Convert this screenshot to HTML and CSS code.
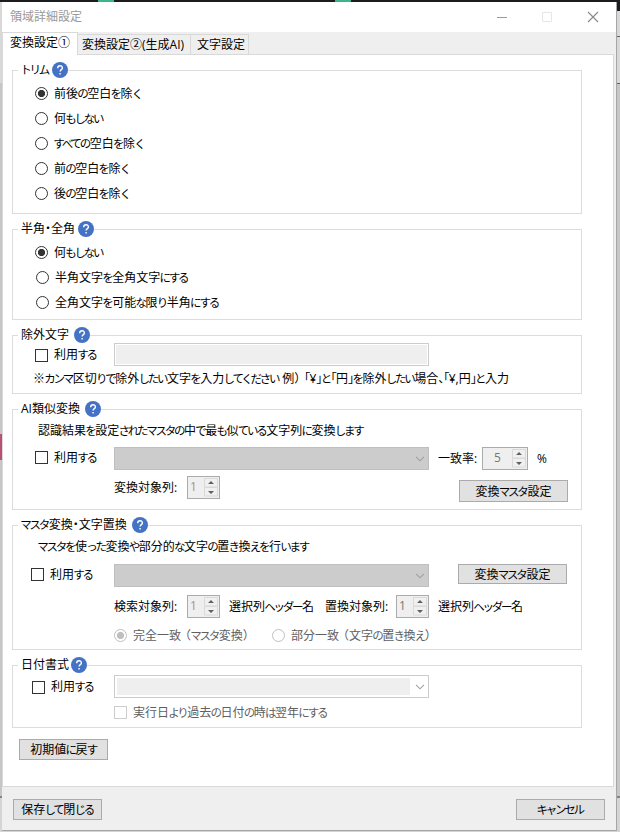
FILE: index.html
```html
<!DOCTYPE html>
<html lang="ja">
<head>
<meta charset="utf-8">
<title>領域詳細設定</title>
<link rel="stylesheet" href="styles.css">
</head>
<body>
<svg class="defs" aria-hidden="true">
  <symbol id="help" viewBox="0 0 16 16"><circle cx="8" cy="8" r="8" fill="#4472c4"/><path d="M5.7 6.2C5.7 3 10.4 3 10.4 5.9C10.4 7.6 8.1 7.7 8.1 9.6M8.1 11v1.6" fill="none" stroke="#fff" stroke-width="1.4"/></symbol>
  <symbol id="chev" viewBox="0 0 10 6"><path d="M1 .8L5 4.8L9 .8" fill="none" stroke="#a0a0a0" stroke-width="1.1"/></symbol>
  <symbol id="spin" viewBox="0 0 14 19"><path d="M.5 .5h13v8.500h-13zM.5 9.500h13v8.500h-13z" fill="#f0f0f0" stroke="#d9d9d9"/><path d="M4 6L7 3L10 6zM4 13L7 16L10 13z" fill="#606060"/></symbol>
</svg>
<div class="window">
  <header class="titlebar">
    <span class="title">領域詳細設定</span>
    <svg class="controls" width="104" height="12" viewBox="0 0 104 12"><path d="M0 6.500h10" stroke="#999"/><path d="M45.500 1.500h9v9h-9z" fill="none" stroke="#e6e6e6"/><path d="M91 1l10 10M101 1l-10 10" stroke="#888" stroke-width="1.1"/></svg>
  </header>
  <nav class="tabs">
    <span class="tab active">変換設定①</span><span class="tab">変換設定②(生成AI)</span><span class="tab last">文字設定</span>
  </nav>
  <main class="panel">
    <section class="group trim">
      <h2><i>トリム</i><svg><use href="#help"/></svg></h2>
      <label class="opt"><b class="radio on"></b>前後<i>の</i>空白<i>を</i>除<i>く</i></label>
      <label class="opt"><b class="radio"></b>何<i>もしない</i></label>
      <label class="opt"><b class="radio"></b><i>すべての</i>空白<i>を</i>除<i>く</i></label>
      <label class="opt"><b class="radio"></b>前<i>の</i>空白<i>を</i>除<i>く</i></label>
      <label class="opt"><b class="radio"></b>後<i>の</i>空白<i>を</i>除<i>く</i></label>
    </section>
    <section class="group width">
      <h2>半角<em>・</em>全角<svg><use href="#help"/></svg></h2>
      <label class="opt"><b class="radio on"></b>何<i>もしない</i></label>
      <label class="opt shift"><b class="radio"></b>半角文字<i>を</i>全角文字<i>にする</i></label>
      <label class="opt shift"><b class="radio"></b>全角文字<i>を</i>可能<i>な</i>限<i>り</i>半角<i>にする</i></label>
    </section>
    <section class="group exclude">
      <h2>除外文字<svg class="far"><use href="#help"/></svg></h2>
      <div class="row">
        <label class="use"><b class="check"></b>利用<i>する</i></label>
        <span class="input"></span>
      </div>
      <p class="note">※<i>カンマ</i>区切<i>りで</i>除外<i>したい</i>文字<i>を</i>入力<i>してください</i> 例<em class="example">）</em><em>「</em>¥<em>」</em><i>と</i><em>「</em>円<em>」</em><i>を</i>除外<i>したい</i>場合<em>、「</em>¥,円<em>」</em><i>と</i>入力</p>
    </section>
    <section class="group similar">
      <h2>AI類似変換<svg class="far"><use href="#help"/></svg></h2>
      <p class="desc">認識結果<i>を</i>設定<i>されたマスタの</i>中<i>で</i>最<i>も</i>似<i>ている</i>文字列<i>に</i>変換<i>します</i></p>
      <div class="row select-row">
        <label class="use"><b class="check"></b>利用<i>する</i></label>
        <span class="select"><svg><use href="#chev"/></svg></span>
        <span class="rate">一致率:</span>
        <span class="spinner wide"><span>5</span><svg><use href="#spin"/></svg></span>
        <span class="percent">%</span>
      </div>
      <div class="row column-row">
        <span class="collabel">変換対象列:</span>
        <span class="spinner warm"><span>1</span><svg><use href="#spin"/></svg></span>
        <button class="master">変換<i>マスタ</i>設定</button>
      </div>
    </section>
    <section class="group replace">
      <h2><i>マスタ</i>変換<em>・</em>文字置換<svg class="far"><use href="#help"/></svg></h2>
      <p class="desc"><i>マスタを</i>使<i>った</i>変換<i>や</i>部分的<i>な</i>文字<i>の</i>置<i>き</i>換<i>えを</i>行<i>います</i></p>
      <div class="row select-row">
        <label class="use"><b class="check"></b>利用<i>する</i></label>
        <span class="select"><svg><use href="#chev"/></svg></span>
        <button class="master">変換<i>マスタ</i>設定</button>
      </div>
      <div class="row column-row">
        <span class="collabel">検索対象列:</span>
        <span class="spinner warm"><span>1</span><svg><use href="#spin"/></svg></span>
        <span class="header-name">選択列<i>ヘッダー</i>名</span>
        <span class="collabel second">置換対象列:</span>
        <span class="spinner"><span>1</span><svg><use href="#spin"/></svg></span>
        <span class="header-name">選択列<i>ヘッダー</i>名</span>
      </div>
      <div class="row modes">
        <label><b class="radio on"></b>完全一致<em class="paren">（</em><i>マスタ</i>変換<em>）</em></label>
        <label><b class="radio"></b>部分一致<em class="paren">（</em>文字<i>の</i>置<i>き</i>換<i>え</i><em>）</em></label>
      </div>
    </section>
    <section class="group date">
      <h2>日付書式<svg><use href="#help"/></svg></h2>
      <div class="row">
        <label class="use"><b class="check"></b>利用<i>する</i></label>
        <span class="select light"><svg><use href="#chev"/></svg></span>
      </div>
      <label class="past"><b class="check"></b>実行日<i>より</i>過去<i>の</i>日付<i>の</i>時<i>は</i>翌年<i>にする</i></label>
    </section>
    <button class="reset">初期値<i>に</i>戻<i>す</i></button>
  </main>
  <footer>
    <button>保存<i>して</i>閉<i>じる</i></button>
    <button><i>キャンセル</i></button>
  </footer>
</div>
</body>
</html>
```
FILE: styles.css
```css
* { box-sizing: border-box; }
body {
  margin: 0;
  width: 620px;
  height: 832px;
  overflow: hidden;
  padding: 2px 3px 1px 2px;
  background:
    linear-gradient(#3eb489, #3eb489) 98px 0 / 16px 2px no-repeat,
    linear-gradient(#3eb489, #3eb489) 335px 0 / 16px 2px no-repeat,
    linear-gradient(#b85078, #b85078) 0 434px / 2px 26px no-repeat,
    linear-gradient(#1c1b1d, #1c1b1d) 0 0 / 620px 2px no-repeat,
    linear-gradient(#1c1b1d, #1c1b1d) 617px 0 / 3px 11px no-repeat,
    linear-gradient(#666, #666) 617px 36px / 3px 1px no-repeat,
    linear-gradient(#666, #666) 617px 83px / 3px 1px no-repeat,
    linear-gradient(#d8d8d8 0 83px, #c6c6c6 83px 796px, #858585 796px 798px, #d4d4d4 798px);
  font: 12px/18px "Open Sans", "Noto Sans CJK JP", sans-serif;
  color: #000;
}
.defs { position: absolute; width: 0; height: 0; }
i { font-style: normal; font-size: 11.5px; letter-spacing: -2.25px; margin: 0 .8px 0 -.8px; }
em { font-style: normal; font-feature-settings: "halt"; }
em.example { margin-right: 4px; }
em.paren { margin-left: 4px; }
.window { width: 615px; height: 829px; border: solid #a6a6a6; border-width: 0 1px 1px 0; background: #efefef; display: flex; flex-direction: column; }
.titlebar { height: 30px; background: #fff; display: flex; align-items: center; justify-content: space-between; padding: 1px 15px 1px 8px; color: #999; flex: none; }
.controls { margin-top: -1px; }
.tabs { height: 22px; display: flex; align-items: flex-end; flex: none; }
.tab { height: 20px; padding: 1px 5px 0 4px; border: 1px solid #d9d9d9; border-width: 1px 1px 0 0; width: 113px; white-space: nowrap; }
.tab.active { width: 76px; height: 23px; margin-bottom: -1px; padding: 0 0 0 7px; background: #fff; border-left-width: 1px; line-height: 20px; z-index: 1; }
.tab.last { width: 58px; padding-left: 6px; }
.panel { height: 733px; width: 612px; border: 1px solid #d9d9d9; background: #fff; padding: 15px 31px 0 9px; flex: none; }
.group { border: 1px solid #dcdcdc; width: 570px; margin-bottom: 15px; display: flex; flex-direction: column; }
.trim { height: 144px; }
.width { height: 91px; }
.exclude { height: 59px; }
.similar { height: 101px; }
.replace { height: 125px; }
.date { height: 63px; }
h2 { margin: -9px 0 0 5px; height: 16px; font: inherit; line-height: 16px; align-self: flex-start; background: #fff; display: flex; padding: 0 0 0 3px; white-space: nowrap; flex: none; }
h2 svg { width: 16px; height: 16px; margin-left: 3px; flex: none; }
h2 svg.far { margin-left: 5px; }
.date h2 svg { margin-left: 2px; }
.opt, .use, .modes label, .past { display: flex; align-items: center; white-space: nowrap; }
.opt { height: 25px; padding-left: 22px; flex: none; }
h2 + .opt { margin-top: 3px; }
.shift { padding-left: 23px; }
.radio { width: 13px; height: 13px; border: 1px solid #333; border-radius: 50%; background: #fff; margin-right: 6px; flex: none; }
.radio.on { background: radial-gradient(circle, #333 0 3.300px, #fff 3.900px); }
.check { width: 13px; height: 13px; border: 1px solid #333; background: #fff; margin-right: 6px; flex: none; }
.row { display: flex; height: 23px; flex: none; white-space: nowrap; align-items: center; }
.use { width: 101px; padding: 1px 0 0 22px; }
.input { width: 315px; height: 23px; border: 1px solid #ccc; background: #efefef; box-shadow: inset 0 0 0 1px #fff; }
p { margin: 0; height: 22px; line-height: 22px; white-space: nowrap; flex: none; }
.note { margin: 2px 0 0 20px; }
.note em:not(.example) { letter-spacing: -.8px; }
.desc { margin: 3px 0 0 25px; }
.similar .select-row { margin-top: 5px; }
.similar .use { padding: 0 0 2px 22px; }
.select { width: 315px; height: 23px; border: 1px solid #bfbfbf; background: #ccc; display: flex; align-items: center; justify-content: flex-end; padding-right: 3px; }
.select svg { width: 10px; height: 6px; }
.select.light { border-color: #ccc; background: linear-gradient(90deg, #efefef 0 293px, #fff 293px) content-box, #fff; padding: 2px 3px 2px 2px; }
.rate { width: 53px; padding-left: 9px; }
.spinner { width: 33px; height: 23px; border: 1px solid #ababab; background: #efefef; color: #777; display: flex; justify-content: space-between; padding: 1px 1px 0 2px; }
.spinner svg { width: 14px; height: 19px; }
.spinner > span { line-height: 17px; }
.spinner.warm > span { color: #b09078; }
.spinner.wide { width: 46px; padding-left: 11px; }
.percent { margin-left: 9px; }
.column-row { margin-top: 6px; padding-left: 101px; }
.collabel { width: 73px; }
.collabel.second { width: 71px; }
.header-name { width: 105px; padding-left: 9px; }
button { height: 21px; width: 89px; border: 1px solid #ababab; background: #e1e1e1; font: inherit; color: #000; padding: 0; line-height: 18px; white-space: nowrap; }
.master { width: 109px; padding-top: 1px; }
.similar .master { height: 22px; margin: 7px 0 0 239px; }
.replace .use { padding: 0 0 2px 18px; }
.replace .select-row { margin-top: 6px; }
.replace .master { height: 20px; align-self: flex-start; margin-left: 29px; }
.replace .column-row { margin-top: 8px; }
.modes { margin-top: 8px; height: 19px; padding-left: 101px; color: #606060; }
.modes label:first-child { width: 158px; }
.modes .radio { border-color: #bfbfbf; }
.modes .radio.on { background: radial-gradient(circle, #bfbfbf 0 3.300px, #fff 3.900px); }
.date .row { margin-top: 2px; }
.date .use { padding-left: 19px; }
.past { margin: 5px 0 0 101px; height: 19px; color: #606060; }
.past .check { border-color: #ccc; }
.reset { margin: -4px 0 0 7px; display: block; }
footer { display: flex; justify-content: space-between; padding: 12px 11px 0 11px; }
```
